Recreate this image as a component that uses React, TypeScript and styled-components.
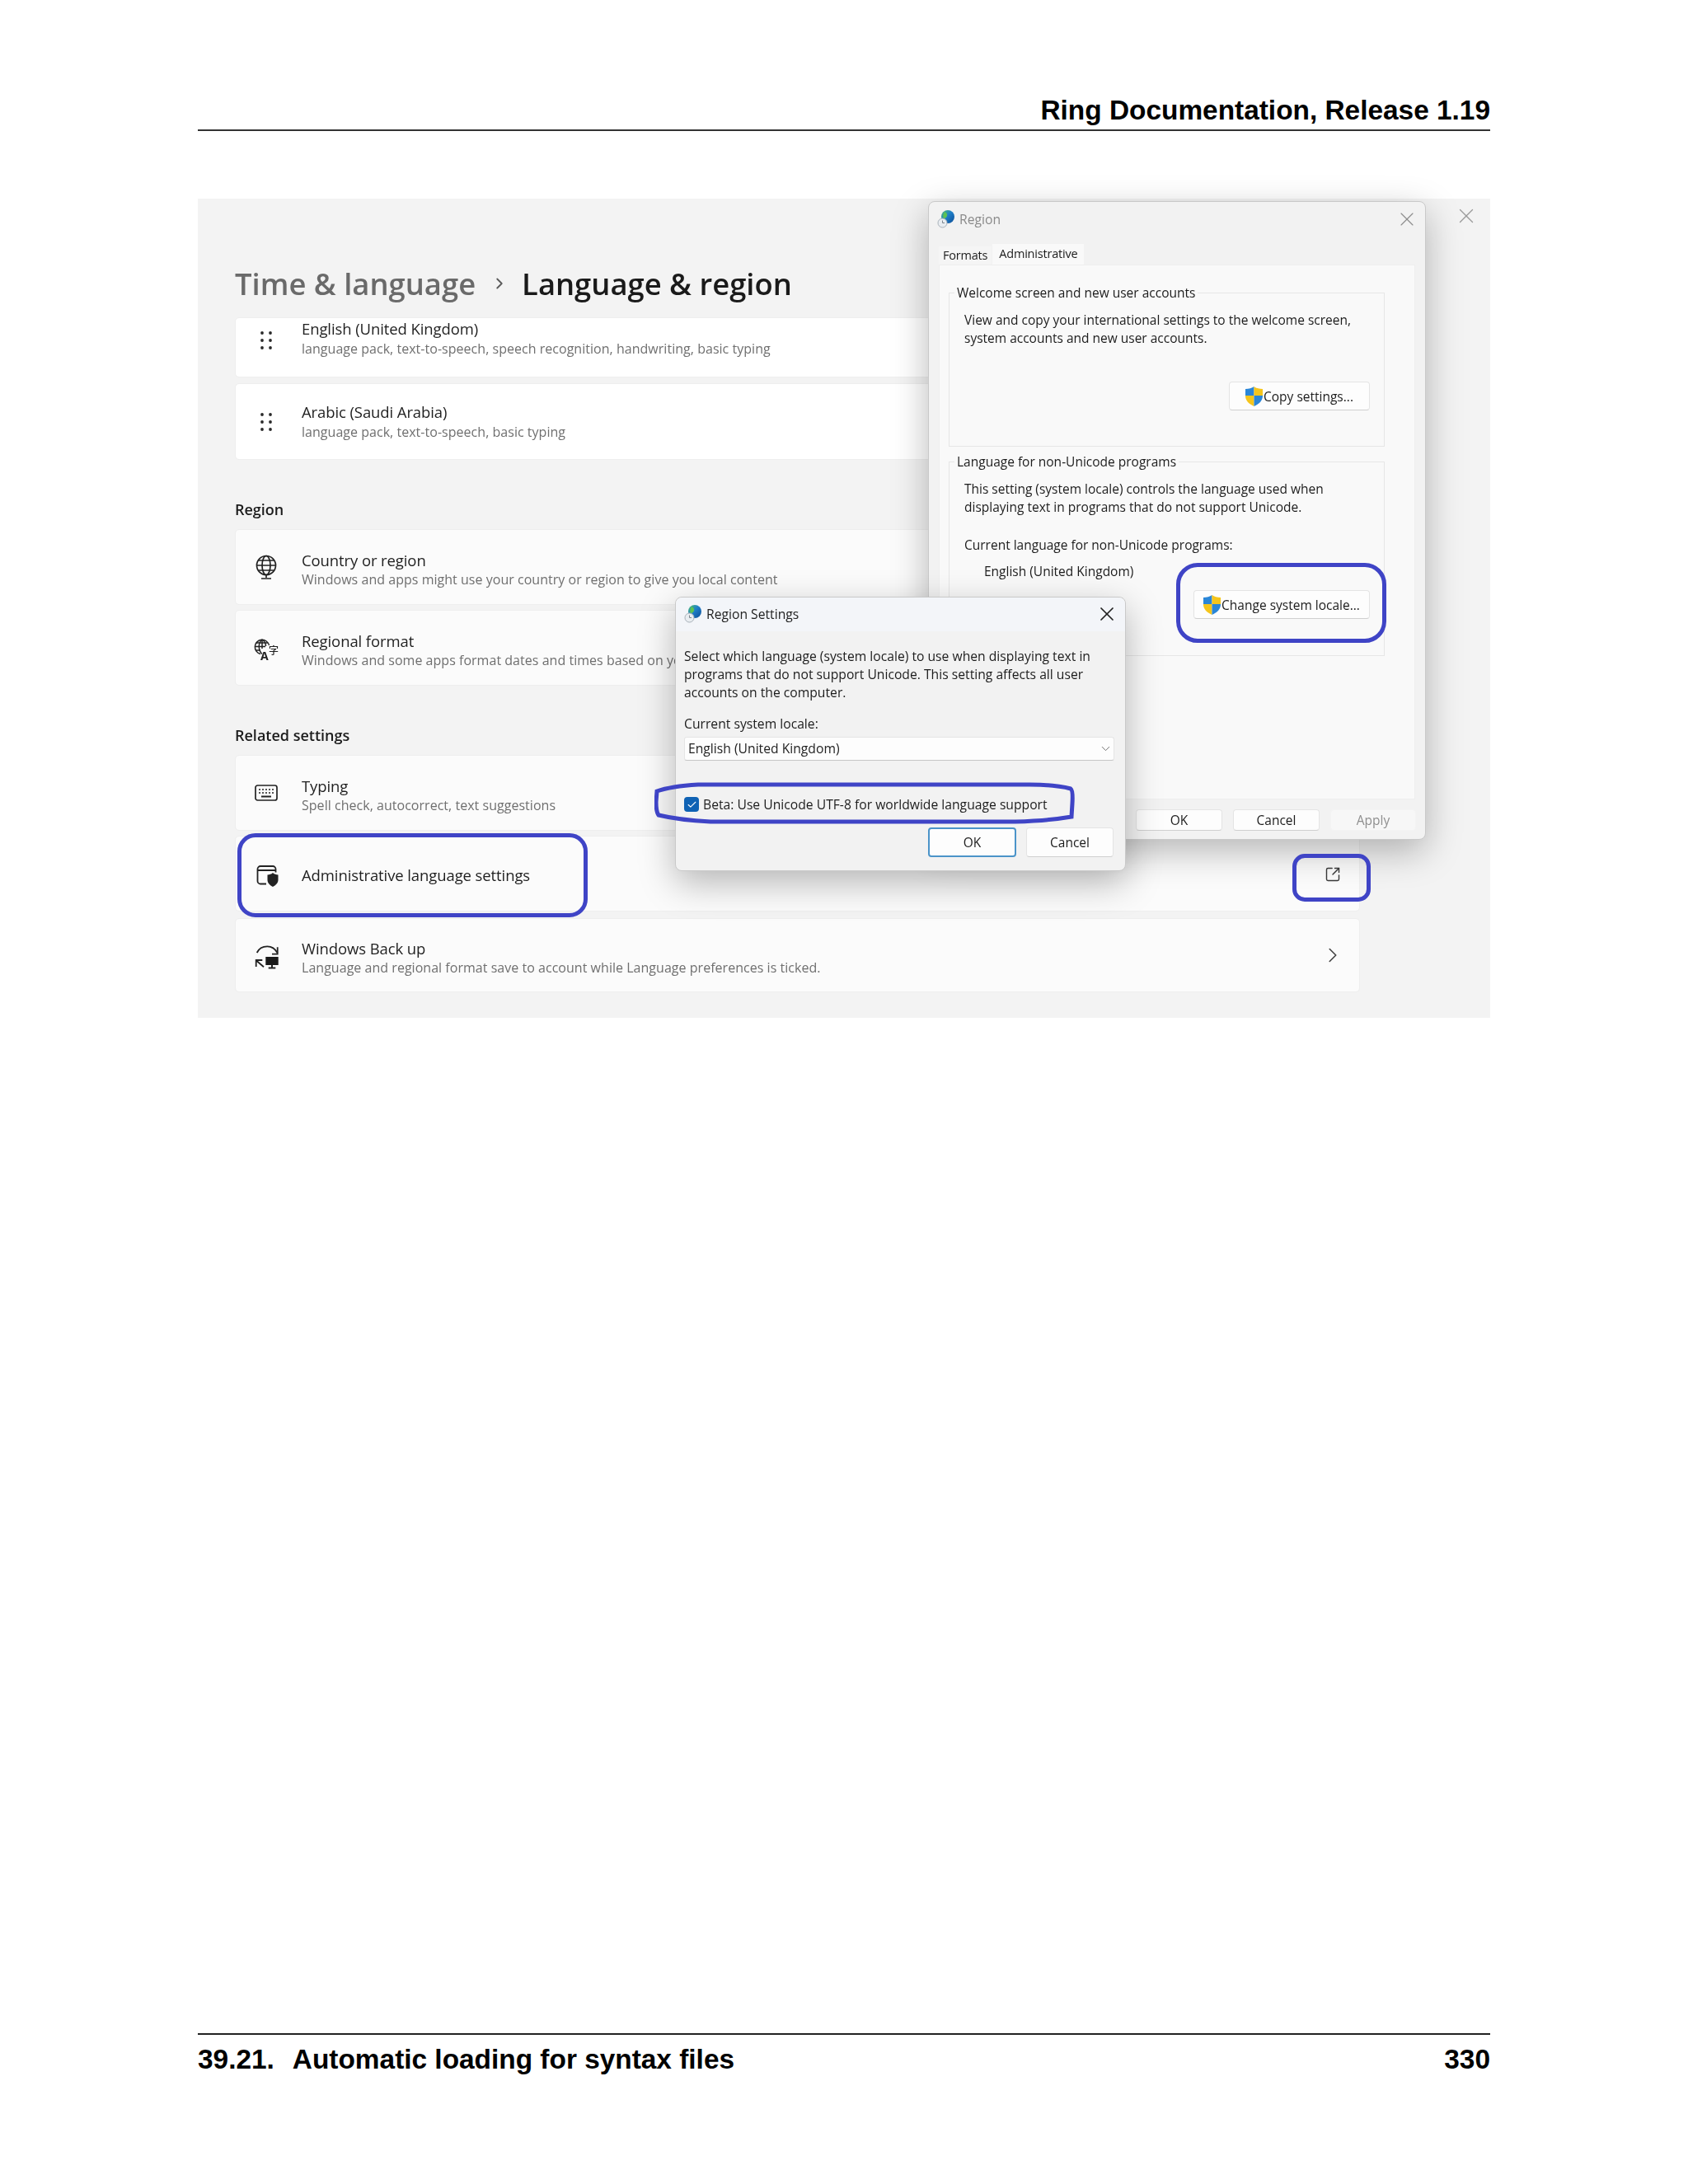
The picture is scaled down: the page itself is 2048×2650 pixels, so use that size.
import React from 'react';
import styled, { createGlobalStyle } from 'styled-components';
import { X, ChevronRight, ChevronDown, Check, SquareArrowOutUpRight } from 'lucide-react';

const UI_FONT = '"Open Sans", "Noto Sans", sans-serif';
const MARK = '#3f44c6';

const GlobalStyle = createGlobalStyle`
  html, body {
    margin: 0;
    padding: 0;
    background: #fff;
  }
`;

const Page = styled.div`
  width: 2048px;
  height: 2650px;
  box-sizing: border-box;
  padding: 0 240px 0 240px;
  display: flex;
  flex-direction: column;
  font-family: "Liberation Sans", Arial, sans-serif;
  color: #000;
  overflow: hidden;
`;

const RunningHead = styled.header`
  height: 159px;
  box-sizing: border-box;
  border-bottom: 2px solid #333;
  text-align: right;
  font-weight: 700;
  font-size: 33.4px;
  line-height: 40px;
  padding-top: 114px;
`;

const Figure = styled.section`
  position: relative;
  margin-top: 82px;
  width: 1568px;
  height: 994px;
  background: #f3f3f3;
  font-family: ${UI_FONT};
  filter: blur(0.4px);
`;

const Pane = styled.div`
  padding: 0 0 32px 45px;
  width: 1365px;
`;

const Breadcrumb = styled.div`
  height: 144px;
  box-sizing: border-box;
  padding-top: 62px;
  display: flex;
  align-items: center;
  font-size: 36.4px;
  font-weight: 600;
  line-height: 48px;
`;

const Crumb = styled.span<{ $current?: boolean }>`
  color: ${(p) => (p.$current ? '#1a1a1a' : '#6a6a6a')};
`;

const CrumbArrow = styled(ChevronRight)`
  color: #5a5a5a;
  margin: 0 16px 0 18px;
`;

const SectionLabel = styled.div`
  margin-top: 48px;
  margin-bottom: 12px;
  font-size: 18px;
  line-height: 24px;
  font-weight: 600;
  color: #1c1c1c;
`;

const Card = styled.div<{ $height: number; $mt?: number; $white?: boolean }>`
  height: ${(p) => p.$height}px;
  margin-top: ${(p) => p.$mt || 0}px;
  background: ${(p) => (p.$white ? '#ffffff' : '#fbfbfb')};
  border: 1px solid #eeeeee;
  border-radius: 5px;
  box-sizing: border-box;
  display: flex;
  align-items: center;
`;

const IconSlot = styled.div<{ $up?: number }>`
  width: 74px;
  margin-right: 6px;
  flex: none;
  display: flex;
  justify-content: center;
  color: #222;
  padding-bottom: ${(p) => p.$up || 0}px;
`;

const CardText = styled.div<{ $top?: number; $bottom?: number }>`
  padding-top: ${(p) => p.$top || 0}px;
  padding-bottom: ${(p) => p.$bottom || 0}px;
  flex: 1;
`;

const CardTitle = styled.div`
  font-size: 18.5px;
  line-height: 24px;
  color: #1f1f1f;
  letter-spacing: -0.1px;
`;

const CardSub = styled.div<{ $loose?: boolean }>`
  font-size: 16px;
  line-height: ${(p) => (p.$loose ? 24 : 22)}px;
  color: #6f6f6f;
  letter-spacing: 0.03px;
`;

const CardEnd = styled.div`
  width: 47px;
  flex: none;
  display: flex;
  color: #444;
`;

const Window = styled.div<{ $left: number; $top: number; $width: number; $height: number }>`
  position: absolute;
  left: ${(p) => p.$left}px;
  top: ${(p) => p.$top}px;
  width: ${(p) => p.$width}px;
  height: ${(p) => p.$height}px;
  box-sizing: border-box;
  background: #f2f2f2;
  border: 1px solid #c9c9c9;
  border-radius: 8px;
  box-shadow: 0 14px 44px rgba(0, 0, 0, 0.28);
  font-size: 15.5px;
  color: #1c1c1c;
`;

const WindowBar = styled.div<{ $height: number; $tint?: boolean }>`
  height: ${(p) => p.$height}px;
  box-sizing: border-box;
  padding: 0 8px ${(p) => (p.$tint ? 2 : 0)}px 10px;
  display: flex;
  align-items: center;
  gap: 5px;
  border-radius: 8px 8px 0 0;
  background: ${(p) => (p.$tint ? '#f3f5f9' : 'transparent')};
`;

const WindowTitle = styled.span<{ $dim?: boolean }>`
  flex: 1;
  font-size: 15.7px;
  color: ${(p) => (p.$dim ? '#8a8a8a' : '#222')};
`;

const TabRow = styled.div`
  display: flex;
  align-items: flex-end;
  height: 34px;
  padding-left: 12px;
  gap: 1px;
`;

const Tab = styled.div<{ $active?: boolean }>`
  height: ${(p) => (p.$active ? 25 : 22)}px;
  box-sizing: border-box;
  padding: 0 ${(p) => (p.$active ? 8 : 5)}px;
  line-height: ${(p) => (p.$active ? 24 : 22)}px;
  font-size: 14.5px;
  letter-spacing: -0.2px;
  background: ${(p) => (p.$active ? '#f9f9f9' : '#f5f5f5')};
`;

const TabPanel = styled.div`
  margin: 0 12px;
  height: 649px;
  box-sizing: border-box;
  background: #f9f9f9;
  border: 1px solid #eeeeee;
  padding: 23px 36px 0 11px;
`;

const Group = styled.fieldset<{ $height: number; $mt?: number }>`
  margin: ${(p) => p.$mt || 0}px 0 0;
  height: ${(p) => p.$height}px;
  box-sizing: border-box;
  border: 1px solid #e6e6e6;
  padding: 12px 17px 0 0;
  min-width: 0;
`;

const Legend = styled.legend`
  margin-left: 6px;
  padding: 0 3px 0 3px;
  line-height: 20px;
  font-size: 15.5px;
`;

const GroupBody = styled.div`
  padding-left: 18px;
`;

const Copy = styled.div<{ $mt?: number; $ml?: number }>`
  margin-top: ${(p) => p.$mt || 0}px;
  margin-left: ${(p) => p.$ml || 0}px;
  line-height: 22px;
  white-space: nowrap;
`;

const ButtonRow = styled.div<{ $mt: number; $gap: number; $right: number }>`
  margin-top: ${(p) => p.$mt}px;
  padding-right: ${(p) => p.$right}px;
  display: flex;
  justify-content: flex-end;
  gap: ${(p) => p.$gap}px;
`;

const DlgButton = styled.div<{ $width: number; $height: number; $kind?: 'primary' | 'off' }>`
  width: ${(p) => p.$width}px;
  height: ${(p) => p.$height}px;
  box-sizing: border-box;
  display: flex;
  align-items: center;
  justify-content: center;
  gap: 1px;
  background: ${(p) => (p.$kind === 'off' ? '#f7f7f7' : '#fdfdfd')};
  color: ${(p) => (p.$kind === 'off' ? '#8f8f8f' : '#1c1c1c')};
  border: ${(p) =>
    p.$kind === 'primary' ? '2px solid #4b94c9' : p.$kind === 'off' ? '1px solid #f3f3f3' : '1px solid #e4e4e4'};
  border-bottom-color: ${(p) => (p.$kind === 'primary' ? '#4b94c9' : p.$kind === 'off' ? '#f3f3f3' : '#cfcfcf')};
  border-radius: 4px;
  font-size: 15.5px;
`;

const DialogBody = styled.div`
  padding: 18.5px 13px 0 10px;
  font-size: 15.7px;
`;

const SelectBox = styled.div`
  margin-top: 5px;
  height: 29px;
  box-sizing: border-box;
  background: #fdfdfd;
  border: 1px solid #e5e5e5;
  border-bottom-color: #c6c6c6;
  border-radius: 3px;
  padding: 0 1px 0 4px;
  display: flex;
  align-items: center;
  justify-content: space-between;
  color: #222;
`;

const CheckRow = styled.div`
  margin-top: 44.5px;
  height: 18px;
  display: flex;
  align-items: center;
  gap: 5px;
  line-height: 18px;
`;

const CheckBox = styled.div`
  width: 18px;
  height: 18px;
  border-radius: 4px;
  background: #0f62b4;
  color: #fff;
  display: flex;
  align-items: center;
  justify-content: center;
`;

const Ring = styled.div<{ $left: number; $top: number; $width: number; $height: number; $radius: number }>`
  position: absolute;
  left: ${(p) => p.$left}px;
  top: ${(p) => p.$top}px;
  width: ${(p) => p.$width}px;
  height: ${(p) => p.$height}px;
  box-sizing: border-box;
  border: 5px solid ${MARK};
  border-radius: ${(p) => p.$radius}px;
`;

const CornerX = styled.div`
  position: absolute;
  left: 1524px;
  top: 6px;
  color: #9a9a9a;
`;

const BetaMark = styled.svg`
  position: absolute;
  left: 554px;
  top: 708px;
`;

const LinkIcon = styled.div`
  position: absolute;
  left: 1367px;
  top: 810px;
  color: #3a3a3a;
`;

const Foot = styled.footer`
  margin-top: auto;
  margin-bottom: 131px;
  border-top: 2px solid #222;
  padding-top: 10px;
  display: flex;
  justify-content: space-between;
  font-weight: 700;
  font-size: 33.4px;
  line-height: 40px;
`;

const FootLead = styled.span`
  margin-right: 22px;
`;

const DragDots = () => (
  <svg width="14" height="22" viewBox="0 0 14 22" fill="#2a2a2a">
    {[2, 12].map((x) =>
      [2, 11, 20].map((y) => <circle key={`${x}-${y}`} cx={x} cy={y} r="1.9" />)
    )}
  </svg>
);

const GlobeIcon = () => (
  <svg width="30" height="32" viewBox="0 0 30 32" fill="none" stroke="#222" strokeWidth="1.7">
    <circle cx="15" cy="14" r="11.500" />
    <ellipse cx="15" cy="14" rx="5" ry="11.500" />
    <path d="M3.500 14h23M5.500 8h19M5.500 20h19M15 25.500v3.500M9 30h12" />
  </svg>
);

const RegionalIcon = () => (
  <svg width="30" height="38" viewBox="0 0 30 38" fill="none" stroke="#222" strokeWidth="1.5">
    <g transform="translate(0 8)">
      <path d="M8 18.500A8.700 8.700 0 1 1 18.500 8" />
      <path d="M10 1c-5 4-5 13 0 17.500M10 1c3 2 4.500 5 4.500 8M10 1v11" />
      <path d="M1.500 9.500H14M2.500 5H17M2.500 14H8" />
      <text x="8" y="25.500" fontFamily="Open Sans, sans-serif" fontSize="14" fontWeight="700" stroke="none" fill="#222">
        A
      </text>
      <text
        x="18"
        y="19"
        fontFamily="Noto Sans CJK SC, sans-serif"
        fontSize="12"
        fontWeight="500"
        stroke="none"
        fill="#222"
      >
        字
      </text>
    </g>
  </svg>
);

const KeyboardIcon = () => (
  <svg width="28" height="20" viewBox="0 0 28 20" fill="none" stroke="#222" strokeWidth="1.7">
    <rect x="1" y="1" width="26" height="18" rx="2.500" />
    <path d="M8 14.500h12" strokeWidth="2" />
    <path d="M5 6h2M9 6h2M13 6h2M17 6h2M21 6h2M5 10h2M9 10h2M13 10h2M17 10h2M21 10h2" strokeWidth="1.7" />
  </svg>
);

const AdminIcon = () => (
  <svg width="30" height="34" viewBox="0 0 30 34" fill="none" stroke="#222" strokeWidth="1.8">
    <path d="M15 29.500H8a3.500 3.500 0 0 1-3.500-3.500V11.500A3.500 3.500 0 0 1 8 8h15a3.500 3.500 0 0 1 3.500 3.500v4M4.500 13h22" />
    <path d="M23 16c2 1.800 4 2.400 6.500 2.400v6.100c0 4-3 6.500-6.500 8.500-3.500-2-6.500-4.500-6.500-8.500v-6.100c2.500 0 4.500-.6 6.500-2.400z" fill="#222" stroke="none" />
  </svg>
);

const BackupIcon = () => (
  <svg width="30" height="34" viewBox="0 0 30 34" fill="none" stroke="#222" strokeWidth="1.8">
    <path d="M3.700 14C6 9 11 6.300 16.300 6.300c5 0 9.700 3 12.400 8" />
    <path d="M28.700 7.300v8.400H22" />
    <path d="M3 23.500l9 7.800M2.700 31V23h7.600" />
    <rect x="14.300" y="19" width="15.400" height="10" fill="#1a1a1a" stroke="none" />
    <path d="M22 29v3.300M17.700 32.600h8.600" strokeWidth="2" />
  </svg>
);

const WorldClock = () => (
  <svg width="22" height="22" viewBox="0 0 22 22">
    <defs>
      <linearGradient id="earth" x1="0" y1="0" x2="1" y2="1">
        <stop offset="0" stopColor="#4cc06a" />
        <stop offset="0.45" stopColor="#1f7fc9" />
        <stop offset="1" stopColor="#0c4d96" />
      </linearGradient>
    </defs>
    <circle cx="13" cy="8" r="8" fill="url(#earth)" />
    <path d="M9 2q4 2 3 5t-4 3q-2-3 1-8z" fill="#5cc253" />
    <circle cx="6.500" cy="15.500" r="5.500" fill="#e9edf1" stroke="#a7b0b8" />
    <path d="M6.500 12.500v3h2.500" fill="none" stroke="#7d868e" />
  </svg>
);

const Shield = () => (
  <svg width="21" height="24" viewBox="0 0 21 24">
    <path d="M10.500 0C8 2 4 3 0 3v8h10.500z" fill="#2a86d8" />
    <path d="M10.500 0c2.500 2 6.500 3 10.500 3v8H10.500z" fill="#f5c51c" />
    <path d="M0 11c0 6 4 10 10.500 13V11z" fill="#f5c51c" />
    <path d="M21 11c0 6-4 10-10.500 13V11z" fill="#2a86d8" />
  </svg>
);

export default function App() {
  return (
    <Page>
      <GlobalStyle />
      <RunningHead>Ring Documentation, Release 1.19</RunningHead>

      <Figure>
        <Pane>
          <Breadcrumb>
            <Crumb>Time &amp; language</Crumb>
            <CrumbArrow size={22} strokeWidth={2} />
            <Crumb $current>Language &amp; region</Crumb>
          </Breadcrumb>

          <Card $height={73} $white>
            <IconSlot $up={18}>
              <DragDots />
            </IconSlot>
            <CardText $bottom={21}>
              <CardTitle>English (United Kingdom)</CardTitle>
              <CardSub $loose>language pack, text-to-speech, speech recognition, handwriting, basic typing</CardSub>
            </CardText>
          </Card>
          <Card $height={93} $mt={7} $white>
            <IconSlot>
              <DragDots />
            </IconSlot>
            <CardText>
              <CardTitle>Arabic (Saudi Arabia)</CardTitle>
              <CardSub $loose>language pack, text-to-speech, basic typing</CardSub>
            </CardText>
          </Card>

          <SectionLabel>Region</SectionLabel>
          <Card $height={92}>
            <IconSlot>
              <GlobeIcon />
            </IconSlot>
            <CardText $top={6}>
              <CardTitle>Country or region</CardTitle>
              <CardSub>Windows and apps might use your country or region to give you local content</CardSub>
            </CardText>
          </Card>
          <Card $height={92} $mt={6}>
            <IconSlot>
              <RegionalIcon />
            </IconSlot>
            <CardText $top={6}>
              <CardTitle>Regional format</CardTitle>
              <CardSub>Windows and some apps format dates and times based on your regional format</CardSub>
            </CardText>
          </Card>

          <SectionLabel>Related settings</SectionLabel>
          <Card $height={92}>
            <IconSlot>
              <KeyboardIcon />
            </IconSlot>
            <CardText $top={6}>
              <CardTitle>Typing</CardTitle>
              <CardSub>Spell check, autocorrect, text suggestions</CardSub>
            </CardText>
          </Card>
          <Card $height={92} $mt={6}>
            <IconSlot>
              <AdminIcon />
            </IconSlot>
            <CardText $top={4}>
              <CardTitle>Administrative language settings</CardTitle>
            </CardText>
          </Card>
          <Card $height={90} $mt={8}>
            <IconSlot>
              <BackupIcon />
            </IconSlot>
            <CardText $top={5}>
              <CardTitle>Windows Back up</CardTitle>
              <CardSub>Language and regional format save to account while Language preferences is ticked.</CardSub>
            </CardText>
            <CardEnd>
              <ChevronRight size={30} strokeWidth={1.3} />
            </CardEnd>
          </Card>
        </Pane>

        <CornerX>
          <X size={30} strokeWidth={1} />
        </CornerX>
        <LinkIcon>
          <SquareArrowOutUpRight size={20} strokeWidth={1.7} />
        </LinkIcon>

        <Window $left={886} $top={3} $width={604} $height={775}>
          <WindowBar $height={42}>
            <WorldClock />
            <WindowTitle $dim>Region</WindowTitle>
            <X size={28} strokeWidth={1} color="#8c8c8c" />
          </WindowBar>
          <TabRow>
            <Tab>Formats</Tab>
            <Tab $active>Administrative</Tab>
          </TabRow>
          <TabPanel>
            <Group $height={197}>
              <Legend>Welcome screen and new user accounts</Legend>
              <GroupBody>
                <Copy>
                  View and copy your international settings to the welcome screen,
                  <br />
                  system accounts and new user accounts.
                </Copy>
                <ButtonRow $mt={42} $gap={0} $right={0}>
                  <DlgButton $width={171} $height={35}>
                    <Shield />
                    Copy settings...
                  </DlgButton>
                </ButtonRow>
              </GroupBody>
            </Group>
            <Group $height={246} $mt={8}>
              <Legend>Language for non-Unicode programs</Legend>
              <GroupBody>
                <Copy>
                  This setting (system locale) controls the language used when
                  <br />
                  displaying text in programs that do not support Unicode.
                </Copy>
                <Copy $mt={24}>Current language for non-Unicode programs:</Copy>
                <Copy $mt={10} $ml={24}>
                  English (United Kingdom)
                </Copy>
                <ButtonRow $mt={12} $gap={0} $right={0}>
                  <DlgButton $width={214} $height={35}>
                    <Shield />
                    Change system locale...
                  </DlgButton>
                </ButtonRow>
              </GroupBody>
            </Group>
          </TabPanel>
          <ButtonRow $mt={12} $gap={13} $right={11}>
            <DlgButton $width={105} $height={26}>
              OK
            </DlgButton>
            <DlgButton $width={105} $height={26}>
              Cancel
            </DlgButton>
            <DlgButton $width={104} $height={26} $kind="off">
              Apply
            </DlgButton>
          </ButtonRow>
        </Window>

        <Window $left={579} $top={483} $width={547} $height={333}>
          <WindowBar $height={41} $tint>
            <WorldClock />
            <WindowTitle>Region Settings</WindowTitle>
            <X size={28} strokeWidth={1.5} color="#222" />
          </WindowBar>
          <DialogBody>
            <Copy>
              Select which language (system locale) to use when displaying text in
              <br />
              programs that do not support Unicode. This setting affects all user
              <br />
              accounts on the computer.
            </Copy>
            <Copy $mt={16}>Current system locale:</Copy>
            <SelectBox>
              <span>English (United Kingdom)</span>
              <ChevronDown size={17} strokeWidth={1.3} color="#666" />
            </SelectBox>
            <CheckRow>
              <CheckBox>
                <Check size={13} strokeWidth={2} />
              </CheckBox>
              Beta: Use Unicode UTF-8 for worldwide language support
            </CheckRow>
            <ButtonRow $mt={19} $gap={12} $right={1}>
              <DlgButton $width={107} $height={36} $kind="primary">
                OK
              </DlgButton>
              <DlgButton $width={106} $height={36}>
                Cancel
              </DlgButton>
            </ButtonRow>
          </DialogBody>
        </Window>

        <Ring $left={48} $top={770} $width={425} $height={102} $radius={22} />
        <Ring $left={1187} $top={442} $width={255} $height={97} $radius={26} />
        <Ring $left={1328} $top={795} $width={95} $height={58} $radius={15} />
        <BetaMark width="514" height="52" viewBox="0 0 514 52" fill="none" stroke={MARK} strokeWidth="5">
          <path d="M53 3 L455 3 Q487 3 505 8 Q508 10 507 26 L506 42 Q477 47 438 48 L68 48 Q30 46 5 40 Q2 36 2 24 L3 11 Q20 5 53 3 Z" />
        </BetaMark>
      </Figure>

      <Foot>
        <span>
          <FootLead>39.21.</FootLead>Automatic loading for syntax files
        </span>
        <span>330</span>
      </Foot>
    </Page>
  );
}
